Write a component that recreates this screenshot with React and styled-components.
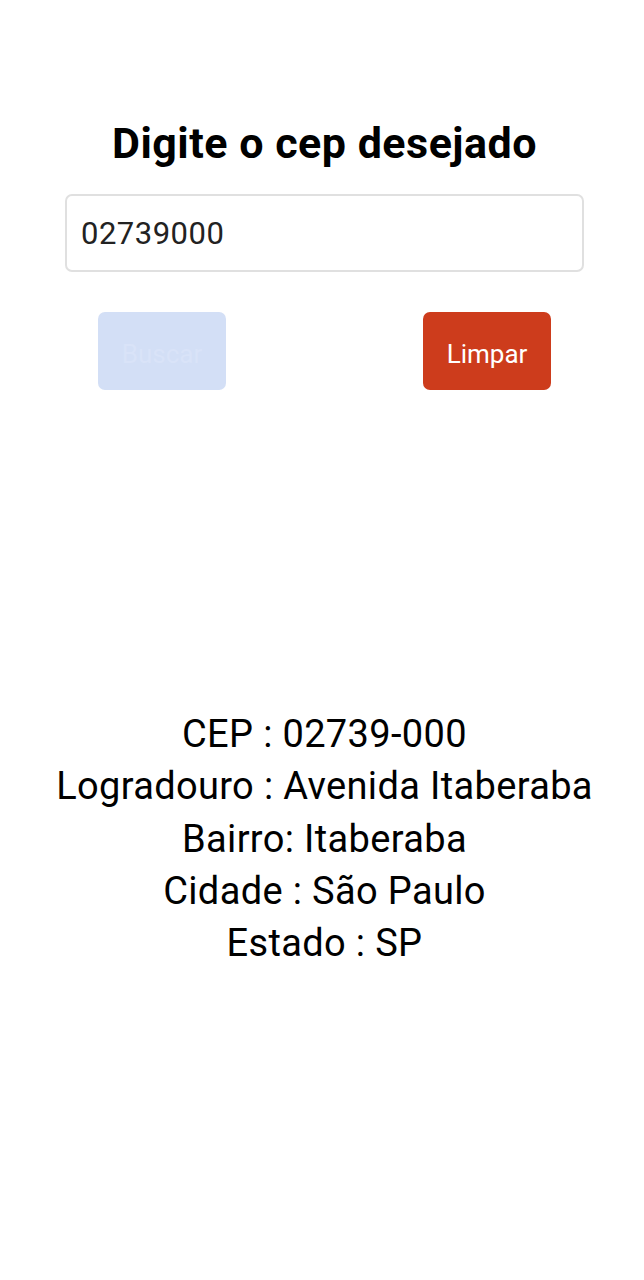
import styled, { createGlobalStyle } from "styled-components";

const GlobalStyle = createGlobalStyle`
    body {
        margin: 0;
        background: #ffffff;
        font-family: Roboto, "Liberation Sans", sans-serif;
    }
`;

const App = () => {
    return (
        <Page>
            <GlobalStyle />
            <Title>Digite o cep desejado</Title>
            <CepInput type="text" defaultValue="02739000" />
            <Actions>
                <Button disabled>Buscar</Button>
                <Button $danger>Limpar</Button>
            </Actions>
            <Result>
                <p>CEP : 02739-000</p>
                <p>Logradouro : Avenida Itaberaba</p>
                <p>Bairro: Itaberaba</p>
                <p>Cidade : São Paulo</p>
                <p>Estado : SP</p>
            </Result>
        </Page>
    );
}

export default App;

const Page = styled.div`
    width: 644px;
    height: 1280px;
    display: flex;
    flex-direction: column;
    align-items: center;
    padding: 115px 0 0 5px;
    box-sizing: border-box;
`;

const Title = styled.h1`
    margin: 0;
    font-size: 43px;
    font-weight: 700;
    letter-spacing: 0.5px;
    color: #000000;
    line-height: 56px;
`;

const CepInput = styled.input`
    margin-top: 23px;
    width: 519px;
    height: 78px;
    box-sizing: border-box;
    border: 2px solid #e0e0e0;
    border-radius: 7px;
    padding: 0 14px;
    font-family: Roboto, "Liberation Sans", sans-serif;
    font-size: 31px;
    letter-spacing: 0.5px;
    color: #222222;
    outline: none;
`;

const Actions = styled.div`
    margin-top: 40px;
    width: 453px;
    display: flex;
    justify-content: space-between;
`;

const Button = styled.button`
    width: 128px;
    height: 78px;
    padding: 6px 0 0;
    border: none;
    border-radius: 7px;
    font-family: Roboto, "Liberation Sans", sans-serif;
    font-size: 26px;
    background: ${p => (p.$danger ? "#cd3c1c" : "#d3dff6")};
    color: ${p => (p.$danger ? "#ffffff" : "#d9e3f8")};
`;

const Result = styled.div`
    margin-top: 318px;
    text-align: center;
    font-size: 38px;
    letter-spacing: 0.35px;
    color: #000000;

    p {
        margin: 0;
        line-height: 52.3px;
    }
`;
